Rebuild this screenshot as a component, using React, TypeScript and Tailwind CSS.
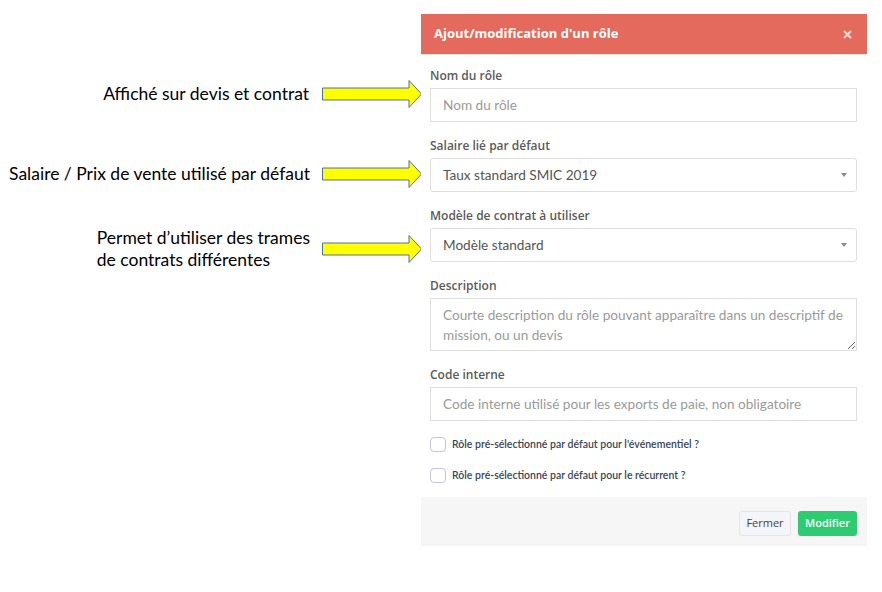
import React from 'react'

const formFont = { fontFamily: '"Open Sans", "Liberation Sans", sans-serif' }
const inputFont = { fontFamily: 'Lato, "Open Sans", sans-serif' }

function Arrow() {
  return (
    <svg width="100" height="28" viewBox="0 0 100 28" className="shrink-0 -mr-px">
      <polygon
        points="0.5,8 87,8 87,0.5 99.5,14 87,27.5 87,20 0.5,20"
        fill="#ffff00"
        stroke="#50709c"
        strokeWidth="1"
      />
    </svg>
  )
}

function Caret() {
  return <span className="w-0 h-0 border-x-[3px] border-t-[4px] border-x-transparent border-t-[#8a8a8a]" />
}

function Field({ label, children }: { label: string; children: React.ReactNode }) {
  return (
    <div className="mb-4">
      <div className="text-[12px] leading-4 font-semibold text-[#5a5a5a] mb-1">{label}</div>
      {children}
    </div>
  )
}

function Select({ value }: { value: string }) {
  return (
    <div
      className="h-[34px] flex items-center justify-between pl-[12px] pr-[9px] border border-[#dedede] rounded-[3px] text-[13.6px] text-[#555]"
      style={inputFont}
    >
      <span>{value}</span>
      <Caret />
    </div>
  )
}

function Check({ label }: { label: string }) {
  return (
    <div className="flex items-center gap-[6px] h-[15px]">
      <div className="w-[16px] h-[15px] rounded-[4px] border border-[#c2c5dd] bg-white" />
      <span className="text-[10.5px] font-semibold text-[#3a4557]" style={{ fontFamily: 'Lato, "Noto Sans", sans-serif' }}>
        {label}
      </span>
    </div>
  )
}

export default function App() {
  return (
    <div className="w-[882px] h-[592px] bg-white flex">
      <div className="w-[421px] shrink-0 pt-[80px] text-[17.5px] text-black" style={{ fontFamily: 'Lato, "Liberation Sans", sans-serif' }}>
        <div className="flex items-center justify-end gap-[13px] h-[28px]">
          <span>Affiché sur devis et contrat</span>
          <Arrow />
        </div>
        <div className="flex items-center justify-end gap-[12px] h-[28px] mt-[52px]">
          <span>Salaire / Prix de vente utilisé par défaut</span>
          <Arrow />
        </div>
        <div className="flex items-center justify-end gap-[12px] mt-[39px]">
          <div className="leading-[22px]">
            <div>Permet d’utiliser des trames</div>
            <div>de contrats différentes</div>
          </div>
          <Arrow />
        </div>
      </div>

      <div className="w-[446px] mt-[14px] self-start bg-white" style={formFont}>
        <div className="h-[41px] bg-[#e36a5c] border-b border-[#ebe3e2] flex items-center justify-between pl-[13px] pr-[15px]">
          <span className="text-[13px] font-bold text-white">Ajout/modification d'un rôle</span>
          <svg width="9" height="9" viewBox="0 0 9 9">
            <path d="M1 1L8 8M8 1L1 8" stroke="#f7d3cd" strokeWidth="2.2" />
          </svg>
        </div>

        <div className="pl-[9px] pr-[10px] pt-[13px] pb-[14px]">
          <Field label="Nom du rôle">
            <input
              className="w-full h-[34px] px-[12px] border border-[#dedede] text-[13.6px] outline-none placeholder:text-[#9a9a9a]"
              style={inputFont}
              placeholder="Nom du rôle"
            />
          </Field>
          <Field label="Salaire lié par défaut">
            <Select value="Taux standard SMIC 2019" />
          </Field>
          <Field label="Modèle de contrat à utiliser">
            <Select value="Modèle standard" />
          </Field>
          <Field label="Description">
            <textarea
              className="block w-full h-[53px] px-[12px] py-[6px] border border-[#dedede] text-[13.6px] leading-[20px] outline-none placeholder:text-[#9a9a9a]"
              style={inputFont}
              placeholder="Courte description du rôle pouvant apparaître dans un descriptif de mission, ou un devis"
            />
          </Field>
          <Field label="Code interne">
            <input
              className="w-full h-[34px] px-[12px] border border-[#dedede] text-[13.6px] outline-none placeholder:text-[#9a9a9a]"
              style={inputFont}
              placeholder="Code interne utilisé pour les exports de paie, non obligatoire"
            />
          </Field>
          <div className="flex flex-col gap-4">
            <Check label="Rôle pré-sélectionné par défaut pour l'événementiel ?" />
            <Check label="Rôle pré-sélectionné par défaut pour le récurrent ?" />
          </div>
        </div>

        <div className="h-[49px] bg-[#f6f6f6] flex justify-end items-start gap-[7px] pt-[14px] pr-[10px]">
          <button className="h-[25px] w-[52px] rounded-[3px] border border-[#e3e5ea] bg-[#f4f5f8] text-[11px] text-[#444]">
            Fermer
          </button>
          <button className="h-[25px] w-[59px] rounded-[3px] bg-[#2ecc71] text-[11px] font-semibold text-white">
            Modifier
          </button>
        </div>
      </div>
    </div>
  )
}
